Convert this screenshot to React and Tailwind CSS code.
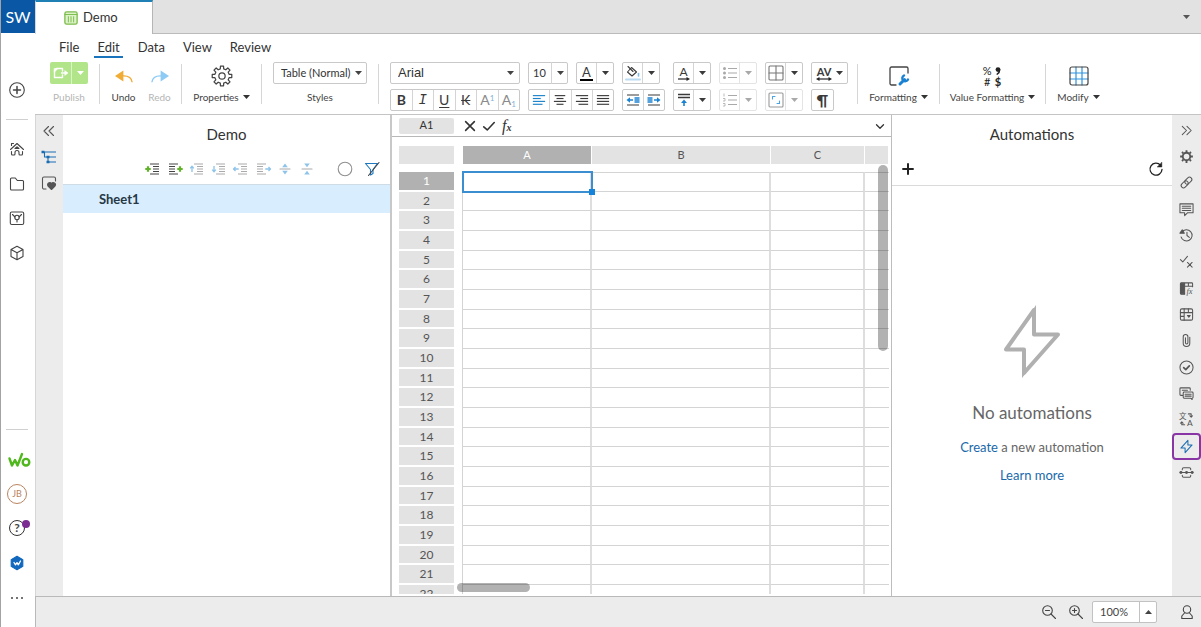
import React from 'react';

const columns = ['A', 'B', 'C', ''];
const rows = Array.from({ length: 22 }, (_, i) => i + 1);
const menus = ['File', 'Edit', 'Data', 'View', 'Review'];

// Stroked line icon on a 16 unit canvas
const Icon = ({ children, className = 'size-4', ...rest }) => (
  <svg
    viewBox="0 0 16 16"
    className={`shrink-0 overflow-visible ${className}`}
    fill="none"
    stroke="currentColor"
    strokeWidth="1.1"
    strokeLinecap="round"
    strokeLinejoin="round"
    aria-hidden="true"
    {...rest}
  >
    {children}
  </svg>
);

const Caret = ({ className = '' }) => (
  <svg viewBox="0 0 7 4" className={`h-1 w-[7px] shrink-0 ${className}`} fill="currentColor" aria-hidden="true">
    <path d="M0 0h7L3.5 4z" />
  </svg>
);

const IconButton = ({ label, children, className = '' }) => (
  <button type="button" aria-label={label} title={label} className={`flex items-center justify-center ${className}`}>
    {children}
  </button>
);

const Separator = () => <div className="mt-0.5 h-10 w-px shrink-0 bg-[#d6d6d6]" />;

/* ---------- ribbon ---------- */

const Gear = ({ className, teeth = 8, ...rest }) => {
  const points = [];
  for (let i = 0; i < teeth; i++) {
    [[-0.3, 5.3], [-0.2, 7.2], [0.2, 7.2], [0.3, 5.3]].forEach(([offset, radius]) => {
      const angle = ((i + offset) / teeth) * Math.PI * 2;
      points.push(`${(8 + radius * Math.sin(angle)).toFixed(2)},${(8 - radius * Math.cos(angle)).toFixed(2)}`);
    });
  }
  return (
    <Icon className={className} {...rest}>
      <polygon points={points.join(' ')} />
      <circle cx="8" cy="8" r="2.3" />
    </Icon>
  );
};

const ToolButton = ({ label, caret, muted, width, children }) => (
  <button type="button" className={`flex shrink-0 flex-col items-center text-[10px] leading-[14px] ${width} ${muted ? 'text-[#b5b5b5]' : 'text-[#444]'}`}>
    <span className="flex h-7 items-center">{children}</span>
    <span className="flex items-center gap-1 whitespace-nowrap">
      {label}
      {caret && <Caret className="text-[#333]" />}
    </span>
  </button>
);

// Row of joined cells with a shared outline
const Cells = ({ children, muted, className = '' }) => (
  <div className={`flex h-[22px] rounded-xs border bg-white divide-x ${muted ? 'border-[#e4e4e4] divide-[#e4e4e4] text-[#a9a9a9]' : 'border-[#c9c9c9] divide-[#d4d4d4] text-[#3a3a3a]'} ${className}`}>
    {children}
  </div>
);

const Cell = ({ label, children }) => (
  <IconButton label={label} className="min-w-0 flex-1 text-sm leading-none">{children}</IconButton>
);

const Split = ({ label, muted, children }) => (
  <Cells muted={muted} className="w-[38px]">
    <Cell label={label}>{children}</Cell>
    <IconButton label={`${label} options`} className="w-4"><Caret /></IconButton>
  </Cells>
);

const Picker = ({ label, options, className, caretClass = 'right-1.5', padding = 'pl-[7px]' }) => (
  <div className={`relative flex h-[22px] ${className}`}>
    <select aria-label={label} className={`w-full appearance-none rounded-xs border border-[#c9c9c9] bg-white text-[#333] ${padding}`}>
      {options.map((option) => <option key={option}>{option}</option>)}
    </select>
    <Caret className={`pointer-events-none absolute top-[9px] text-[#444] ${caretClass}`} />
  </div>
);

const Align = ({ lines, className = '' }) => (
  <Icon className={`size-3.5 ${className}`} strokeLinecap="butt" strokeWidth="1.3">
    {lines.map(([x1, x2], i) => <path key={i} d={`M${x1} ${3 + i * 3.3}H${x2}`} />)}
  </Icon>
);

const ListIcon = ({ numbered }) => (
  <Icon strokeLinecap="butt">
    <path d="M6 3.5h9M6 8h9M6 12.5h9" />
    {numbered
      ? <path d="M2 1.5v3M1 6.500h2v2.500H1M1 11.500h2v2.500H1" strokeWidth="0.8" />
      : <g fill="currentColor" stroke="none"><circle cx="2.500" cy="3.500" r="1.500" /><circle cx="2.500" cy="8" r="1.500" /><circle cx="2.500" cy="12.500" r="1.500" /></g>}
  </Icon>
);

const IndentIcon = ({ right }) => (
  <Icon strokeLinecap="butt">
    <path d="M2 3h12M2 13h12" />
    <g stroke="#1a82d2" strokeWidth="1.4" transform={right ? 'translate(16 0) scale(-1 1)' : undefined}>
      <path d="M3 8h5M9.500 6h5M9.500 8h5M9.500 10h5" />
      <path d="M1.500 8l3.500-2.800v5.600z" fill="#1a82d2" stroke="none" />
    </g>
  </Icon>
);

const Ribbon = () => (
  <header className="shrink-0 border-b border-[#c4c4c4] bg-white">
    <nav className="flex h-6 items-stretch gap-3 pl-[21px] text-[13px] text-[#333]">
      {menus.map((menu) => (
        <a key={menu} href={`#${menu}`} className={`border-b-2 px-[3px] pt-1 leading-[18px] ${menu === 'Edit' ? 'border-[#1a73bd]' : 'border-transparent'}`}>
          {menu}
        </a>
      ))}
    </nav>

    <div className="flex h-14 items-start overflow-hidden pt-1">
      <div className="flex w-16 shrink-0 flex-col items-center gap-1.5 pl-1 text-[10px] leading-[14px] text-[#b5b5b5]">
        <div className="flex h-[22px] w-[38px] divide-x divide-[#d9f4c5] rounded-xs bg-[#b2e58a] text-white">
          <IconButton label="Publish" className="flex-1">
            <Icon strokeWidth="1.4">
              <path d="M9.500 6V3.500H3.500L1.500 5.500v7h8V10" />
              <path d="M1.500 3.500h3.500l-3.500 3.500z" fill="currentColor" strokeWidth="0.6" />
              <path d="M8.500 8H12" />
              <path d="M12 5.800L15 8l-3 2.200z" fill="currentColor" strokeWidth="0.6" />
            </Icon>
          </IconButton>
          <IconButton label="Publish options" className="w-4"><Caret /></IconButton>
        </div>
        <span>Publish</span>
      </div>
      <Separator />
      <div className="flex w-[81px] shrink-0 justify-center pl-0.5">
        <ToolButton label="Undo" width="w-9">
          <Icon className="size-5" stroke="#f0ac34" strokeLinecap="butt">
            <path d="M6 8c5-.5 8 1 8.500 5" />
            <path d="M.800 7.900L7.500 3.500v8.800z" fill="#f0ac34" stroke="none" />
          </Icon>
        </ToolButton>
        <ToolButton label="Redo" width="w-9" muted>
          <Icon className="size-5" stroke="#8dcbf4" strokeLinecap="butt">
            <path d="M10 8c-5-.5-8 1-8.500 5" />
            <path d="M15.200 7.900L8.500 3.500v8.800z" fill="#8dcbf4" stroke="none" />
          </Icon>
        </ToolButton>
      </div>
      <Separator />
      <ToolButton label="Properties" caret width="w-[79px]">
        <Gear className="size-[22px]" strokeWidth="0.9" />
      </ToolButton>
      <Separator />
      <div className="flex w-[116px] shrink-0 flex-col items-center gap-1.5 text-[10px] leading-[14px] text-[#444]">
        <Picker label="Table style" options={['Table (Normal)']} className="w-[94px] text-[11px]" caretClass="right-[5px]" />
        <span>Styles</span>
      </div>
      <Separator />

      <div className="flex w-[478px] shrink-0 gap-2 pl-[11px]">
        <div className="flex w-[130px] flex-col gap-[5px]">
          <Picker label="Font" options={['Arial']} className="w-full font-[Liberation_Sans,sans-serif] text-[13px]" />
          <Cells>
            <Cell label="Bold"><b>B</b></Cell>
            <Cell label="Italic"><i className="font-[Liberation_Mono,monospace]">I</i></Cell>
            <Cell label="Underline"><span className="underline underline-offset-2">U</span></Cell>
            <Cell label="Strikethrough"><span className="line-through">K</span></Cell>
            <Cell label="Superscript"><span className="text-[#8a8a8a]">A<sup className="text-[8px] text-[#7fb2d6]">1</sup></span></Cell>
            <Cell label="Subscript"><span className="text-[#8a8a8a]">A<sub className="text-[8px] text-[#7fb2d6]">1</sub></span></Cell>
          </Cells>
        </div>

        <div className="flex w-[86px] flex-col gap-[5px]">
          <div className="flex gap-2">
            <div className="relative">
              <Picker label="Font size" options={['10']} className="w-10 text-[11px]" caretClass="right-1" padding="pl-1" />
              <span className="pointer-events-none absolute top-0 right-4 h-full w-px bg-[#d4d4d4]" />
            </div>
            <Split label="Text color">
              <span className="border-b-2 border-black px-0.5 text-[13px] leading-[13px]">A</span>
            </Split>
          </div>
          <Cells>
            <Cell label="Align left"><Align className="text-[#1a82c9]" lines={[[1, 15], [1, 10], [1, 15], [1, 12]]} /></Cell>
            <Cell label="Align center"><Align lines={[[2, 14], [4, 12], [1, 15], [4, 12]]} /></Cell>
            <Cell label="Align right"><Align lines={[[1, 15], [6, 15], [1, 15], [4, 15]]} /></Cell>
            <Cell label="Justify"><Align lines={[[1, 15], [1, 15], [1, 15], [1, 15]]} /></Cell>
          </Cells>
        </div>

        <div className="flex w-[43px] flex-col gap-[5px]">
          <Split label="Fill color">
            <Icon>
              <path d="M6.500 2.500L11.500 7 7 11 2.500 7z" />
              <path d="M3 1.500l5 5" />
              <path d="M1 14.500h14" stroke="#b9dcf3" strokeWidth="2" />
              <path d="M13.500 8.500v2.500" stroke="#7fbce6" strokeWidth="1.600" />
            </Icon>
          </Split>
          <Cells>
            <Cell label="Decrease indent"><IndentIcon /></Cell>
            <Cell label="Increase indent"><IndentIcon right /></Cell>
          </Cells>
        </div>

        <div className="flex w-[38px] flex-col gap-[5px]">
          <Split label="Text direction">
            <span className="flex flex-col items-center text-xs leading-[11px]">
              A
              <svg viewBox="0 0 12 4" className="h-1 w-3" aria-hidden="true">
                <path d="M0 2h9" stroke="#222" strokeWidth="1.200" />
                <path d="M8.500 0L12 2 8.500 4z" fill="#222" />
              </svg>
            </span>
          </Split>
          <Split label="Vertical align">
            <Icon strokeLinecap="butt">
              <path d="M2 2.500h12M2 5.500h12" strokeWidth="1.300" />
              <path d="M8 10v4" stroke="#1a82d2" strokeWidth="1.600" />
              <path d="M8 7.500l3 3.500H5z" fill="#1a82d2" stroke="none" />
            </Icon>
          </Split>
        </div>

        <div className="flex w-[38px] flex-col gap-[5px]">
          <Split label="Bulleted list" muted><ListIcon /></Split>
          <Split label="Numbered list" muted><ListIcon numbered /></Split>
        </div>

        <div className="flex w-[38px] flex-col gap-[5px]">
          <Split label="Borders">
            <Icon stroke="#777">
              <rect x="1" y="1" width="14" height="14" rx="1" />
              <path d="M8 1v14M1 8h14" />
            </Icon>
          </Split>
          <Split label="Merge cells" muted>
            <Icon stroke="#999">
              <rect x="1" y="1" width="14" height="14" rx="1" />
              <path d="M4.500 7V4.500H7M11.500 9v2.500H9" stroke="#4ba3df" />
            </Icon>
          </Split>
        </div>

        <div className="flex w-[37px] flex-col gap-[5px]">
          <Cells>
            <IconButton label="Letter spacing" className="w-full gap-1">
              <span className="flex flex-col items-center text-[11px] font-bold leading-[11px]">
                AV
                <svg viewBox="0 0 16 4" className="h-1 w-4" aria-hidden="true">
                  <path d="M3 2h10" stroke="#222" strokeWidth="1.200" />
                  <path d="M3.500 0L0 2l3.500 2zM12.500 0L16 2l-3.500 2z" fill="#222" />
                </svg>
              </span>
              <Caret />
            </IconButton>
          </Cells>
          <Cells className="w-[23px]"><Cell label="Paragraph marks"><b className="text-base leading-4">¶</b></Cell></Cells>
        </div>
      </div>
      <Separator />

      <ToolButton label="Formatting" caret width="w-[81px]">
        <Icon className="size-5" viewBox="0 0 20 20" strokeWidth="1.3">
          <path d="M7 19H2.500A1.500 1.500 0 0 1 1 17.500v-15A1.500 1.500 0 0 1 2.500 1h15A1.500 1.500 0 0 1 19 2.500V7" />
          <path d="M11 18l4.500-4.500" stroke="#1a82d2" strokeWidth="3" />
          <path d="M15 9.500a3 3 0 1 0 4 4" stroke="#1a82d2" strokeWidth="2.400" />
        </Icon>
      </ToolButton>
      <Separator />
      <ToolButton label="Value Formatting" caret width="w-[105px]">
        <span className="grid grid-cols-2 items-center justify-items-center gap-x-0.5 text-[11px] leading-[11px] text-[#222]">
          <span>%</span>
          <Icon className="size-2" viewBox="0 0 8 8">
            <circle cx="4" cy="2.600" r="2.400" fill="currentColor" stroke="none" />
            <path d="M5.600 3c0 2-.8 3.300-2.400 4.200" strokeWidth="1.500" />
          </Icon>
          <span>#</span>
          <b>$</b>
        </span>
      </ToolButton>
      <Separator />
      <ToolButton label="Modify" caret width="w-[65px]">
        <Icon className="size-5" viewBox="0 0 20 20" strokeWidth="1.2">
          <path d="M1 7h18M1 13h18M7 1v18M13 1v18" stroke="#2e93dc" />
          <rect x="1" y="1" width="18" height="18" rx="2" />
        </Icon>
      </ToolButton>
    </div>
  </header>
);

/* ---------- left side ---------- */

const NavRail = () => (
  <nav aria-label="Main" className="flex w-[35px] shrink-0 flex-col border-l border-[#a3a3a3] bg-white text-[#444]">
    <div className="flex h-[33px] w-full shrink-0 items-center justify-center bg-[#0957a5] text-base text-white">SW</div>
    <div className="flex flex-1 flex-col items-center pr-0.5">
      <IconButton label="New" className="mt-12 size-[18px] shrink-0">
        <Icon><circle cx="8" cy="8" r="7.300" /><path d="M8 4.500v7M4.500 8h7" strokeWidth="1.500" /></Icon>
      </IconButton>
      <div className="mt-5 h-px w-[22px] shrink-0 bg-[#d0d0d0]" />
      <div className="mt-5 flex h-[122px] shrink-0 flex-col justify-between">
        <IconButton label="Home" className="size-[18px]">
          <Icon>
            <path d="M1.500 8.500L8 2.500l6.500 6M2.500 4.500v-2h2M2.500 10.500v2.500a1 1 0 0 0 1 1H5a1 1 0 0 0 1-1v-1.500a2 2 0 0 1 4 0V13a1 1 0 0 0 1 1h1.500a1 1 0 0 0 1-1v-2.500" />
            <path d="M6 7.500L8 5.800l2 1.700z" fill="currentColor" />
          </Icon>
        </IconButton>
        <IconButton label="Files" className="size-[18px]">
          <Icon><path d="M1.500 13V3a1 1 0 0 1 1-1h3.800l2 2.500h5.200a1 1 0 0 1 1 1V13a1 1 0 0 1-1 1h-11a1 1 0 0 1-1-1z" /></Icon>
        </IconButton>
        <IconButton label="Data connections" className="size-[18px]">
          <Icon>
            <rect x="1.300" y="2" width="13.400" height="12.500" rx="1.500" />
            <path d="M3.500 4.500L6 7M12.500 4.500L10 7M8 10v2" />
            <circle cx="8" cy="7.500" r="2.200" />
          </Icon>
        </IconButton>
        <IconButton label="Apps" className="size-[18px]">
          <Icon><path d="M8 1.300l6 3.200v7L8 14.700l-6-3.200v-7zM2 4.500l6 3.300 6-3.300M8 7.800v6.900" /></Icon>
        </IconButton>
      </div>

      <div className="mt-auto h-px w-[22px] shrink-0 bg-[#d0d0d0]" />
      <div className="mt-3 mb-3 grid h-[173px] shrink-0 auto-rows-fr place-items-center">
        <IconButton label="Workiva" className="h-5 w-6">
          <svg viewBox="0 0 24 18" className="h-[18px] w-6 overflow-visible" fill="none" stroke="#4fb81c" strokeWidth="2.400" strokeLinecap="round" strokeLinejoin="round" aria-hidden="true">
            <path d="M4.500 8.500L7 15.500l3-5.500 2.500 5.500L17 4" />
            <circle cx="21" cy="12.200" r="3.300" />
          </svg>
        </IconButton>
        <button type="button" aria-label="Profile" className="size-5 rounded-full border border-[#b98460] text-[9px] leading-none text-[#b98460]">JB</button>
        <IconButton label="Help" className="relative size-4 rounded-full border border-[#333] text-xs font-bold leading-none">
          ?
          <span className="absolute -top-px left-3 size-2 rounded-full bg-[#7b2d91]" />
        </IconButton>
        <IconButton label="Wdesk" className="size-4">
          <Icon>
            <path d="M8 1.200l5.800 3.400v6.800L8 14.800l-5.800-3.400V4.600z" fill="#1168bd" stroke="#1168bd" />
            <path d="M5 7.500l1.500 2.300L8 7.600l1.300 2.200L11.500 6" stroke="#fff" strokeWidth="1.300" />
          </Icon>
        </IconButton>
        <IconButton label="More" className="size-4">
          <Icon fill="currentColor" stroke="none">
            <circle cx="3" cy="8" r="1" /><circle cx="8" cy="8" r="1" /><circle cx="13" cy="8" r="1" />
          </Icon>
        </IconButton>
      </div>
    </div>
  </nav>
);

// Outline toolbar glyph: text lines with a mark on one side
const OutlineIcon = ({ mark, right, muted }) => {
  const color = muted ? '#8ec4ea' : '#62b22b';
  const shapes = {
    plus: 'M3 5.200v5.600M.3 8h5.400',
    up: 'M3 11V5.500M1.200 7.300L3 5.200l1.800 2.100',
    down: 'M3 5v5.500M1.200 8.700L3 10.800l1.800-2.100',
    left: 'M5.700 8H.8M2.500 6L.5 8l2 2',
  };
  return (
    <Icon strokeLinecap="butt" className={muted ? 'size-4 text-[#aaa]' : 'size-4 text-[#444]'}>
      <g transform={right ? 'translate(16 0) scale(-1 1)' : undefined}>
        <path d="M5 3h9M8 5.500h6M8 8h6M8 10.500h6M5 13h9" />
        <path d={shapes[mark]} stroke={color} strokeWidth={muted ? 1.3 : 2.2} />
      </g>
    </Icon>
  );
};

const OutlinePanel = () => (
  <aside className="flex w-[329px] shrink-0 flex-col border-r-2 border-[#c8c8c8] bg-white">
    <h2 className="h-[38px] text-center text-[15px] leading-[38px] text-[#333]">Demo</h2>
    <div className="flex h-8 shrink-0 items-center justify-end border-b border-[#cfdbe5] pr-2.5">
      <div className="mr-[22px] flex gap-1.5">
        <IconButton label="Insert before"><OutlineIcon mark="plus" /></IconButton>
        <IconButton label="Insert after"><OutlineIcon mark="plus" right /></IconButton>
        <IconButton label="Move up"><OutlineIcon mark="up" muted /></IconButton>
        <IconButton label="Move down"><OutlineIcon mark="down" muted /></IconButton>
        <IconButton label="Outdent"><OutlineIcon mark="left" muted /></IconButton>
        <IconButton label="Indent"><OutlineIcon mark="left" muted right /></IconButton>
        <IconButton label="Expand all">
          <Icon className="size-4 text-[#aaa]"><path d="M3 8h10" /><path d="M8 2.500l2.800 3.700H5.200zM8 13.500l2.800-3.700H5.200z" fill="#8ec4ea" stroke="none" /></Icon>
        </IconButton>
        <IconButton label="Collapse all">
          <Icon className="size-4 text-[#aaa]"><path d="M3 8h10" /><path d="M8 6.200l2.800-3.700H5.200zM8 9.800l2.800 3.700H5.200z" fill="#8ec4ea" stroke="none" /></Icon>
        </IconButton>
      </div>
      <IconButton label="Status"><Icon className="size-4 text-[#8f8f8f]"><circle cx="8" cy="8" r="6.800" /></Icon></IconButton>
      <IconButton label="Clear filter" className="ml-[11px]">
        <Icon stroke="#1d78bf"><path d="M1.500 2.500h12l-4.500 6v4l-2.500 1.500v-5.500z" /><path d="M15 1.500L4.500 14.500" stroke="#444" /></Icon>
      </IconButton>
    </div>
    <a href="#Sheet1" className="h-7 bg-[#d8edfd] pl-9 text-[13px] font-bold leading-7 text-[#273845]">Sheet1</a>
  </aside>
);

const LeftStrip = () => (
  <div className="flex w-7 shrink-0 flex-col items-center border-l border-[#d6d6d6] bg-[#ececec] pt-[3px] pr-0.5 text-[#555]">
    <IconButton label="Collapse panel" className="size-[26px]"><Icon><path d="M7.500 3.500L3 8l4.500 4.500M12.500 3.500L8 8l4.500 4.500" /></Icon></IconButton>
    <IconButton label="Outline" className="size-[26px]">
      <Icon className="size-4 text-[#1b6db3]" strokeLinecap="butt">
        <path d="M2 3H15M3.500 3v5H7M7 8h8M7 8v5h8" />
        <path d="M.500 3h3M5.500 8h3M5.500 13h3" strokeWidth="2.600" />
      </Icon>
    </IconButton>
    <IconButton label="Favorites" className="size-[26px]">
      <Icon>
        <path d="M5 14H3a1.500 1.500 0 0 1-1.500-1.500v-9A1.500 1.500 0 0 1 3 2h10a1.500 1.500 0 0 1 1.500 1.500V6" />
        <path d="M10.500 14.500L7 11a2 2 0 0 1 3.500-2.500A2 2 0 0 1 14 11z" fill="currentColor" />
      </Icon>
    </IconButton>
  </div>
);

/* ---------- spreadsheet ---------- */

const GridColumns = () => (
  <colgroup>
    <col className="w-[55px]" />
    <col className="w-[9px]" />
    <col className="w-[129px]" />
    <col className="w-[179px]" />
    <col className="w-[94px]" />
    <col />
  </colgroup>
);

const Sheet = () => (
  <main className="relative flex min-w-0 flex-1 flex-col overflow-hidden bg-white">
    <div className="flex h-[22px] shrink-0 items-center border-b border-[#b8b8b8] pr-1 pl-[7px] text-[#333]">
      <input aria-label="Cell reference" defaultValue="A1" className="h-4 w-[55px] rounded-xs bg-[#e3e3e3] text-center text-[11px] outline-none" />
      <IconButton label="Cancel" className="ml-2 w-4"><Icon className="size-3.5" strokeWidth="1.800"><path d="M3 3l10 10M13 3L3 13" /></Icon></IconButton>
      <IconButton label="Accept" className="ml-[3px] w-4"><Icon className="size-3.5" strokeWidth="1.800"><path d="M2 9l4 3.500L14 4" /></Icon></IconButton>
      <IconButton label="Insert function" className="ml-[5px] font-[Liberation_Serif,serif] text-base italic leading-4">
        f<sub className="text-[10px] font-bold">x</sub>
      </IconButton>
      <input aria-label="Formula" className="h-4 min-w-0 flex-1 px-2 text-xs outline-none" />
      <IconButton label="Expand formula bar"><Icon className="size-3.5" strokeWidth="1.500"><path d="M4 6.500l4 4 4-4" /></Icon></IconButton>
    </div>

    <div className="mr-0.5 mb-0.5 ml-[7px] min-h-0 flex-1 overflow-hidden pt-[9px]">
      <table className="w-full table-fixed border-separate border-spacing-0 text-center text-xs text-[#555]">
        <GridColumns />
        <thead>
          <tr className="h-[18px] text-[11px]">
            <td className="bg-[#e3e3e3]" />
            <td />
            {columns.map((column, i) => (
              <th key={i} scope="col" className={`border-r border-white p-0 font-normal leading-[18px] ${i === 0 ? 'bg-[#b1b1b1] text-white' : 'bg-[#e3e3e3]'}`}>
                {column}
              </th>
            ))}
          </tr>
          <tr className="h-2"><td colSpan={6} className="p-0" /></tr>
        </thead>
      </table>
      <table className="h-[433px] w-full table-fixed border-separate border-spacing-0 text-center text-xs text-[#555]">
        <GridColumns />
        <tbody>
          {rows.map((row) => (
            <tr key={row}>
              <th scope="row" className={`border-b-2 border-white p-0 font-normal leading-4 ${row === 1 ? 'bg-[#b1b1b1] text-white' : 'bg-[#e3e3e3]'}`}>
                {row}
              </th>
              <td className="border-r border-[#d4d4d4] p-0" />
              {columns.map((column, i) => (
                <td key={i} className={`relative border-[#d4d4d4] border-b p-0 ${row === 1 ? 'border-t' : ''} ${i < 3 ? 'border-r-2 border-r-[#dedede]' : ''}`}>
                  {row === 1 && i === 0 && (
                    <div className="absolute -inset-y-0.5 -right-[3px] -left-px z-10 border-2 border-[#3b8fd0]">
                      <span className="absolute -right-1 -bottom-1 size-1.5 bg-[#1583da]" />
                    </div>
                  )}
                </td>
              ))}
            </tr>
          ))}
        </tbody>
      </table>
    </div>

    {/* Scrollbar thumbs */}
    <div className="absolute top-[50px] right-[3px] z-20 h-[186px] w-2.5 rounded-full bg-black/30" />
    <div className="absolute bottom-1 left-[65px] z-20 h-[9px] w-[73px] rounded-full bg-black/30" />
  </main>
);

/* ---------- right side ---------- */

const Automations = () => (
  <aside className="flex w-[281px] shrink-0 flex-col border-l border-[#bdbdbd] bg-white">
    <h2 className="h-[38px] shrink-0 text-center text-[15px] leading-[38px] text-[#333]">Automations</h2>
    <div className="flex h-[33px] shrink-0 items-center justify-between border-b border-[#dadada] px-2 text-[#222]">
      <IconButton label="Add automation"><Icon strokeWidth="2" strokeLinecap="butt"><path d="M8 2.300v11.400M2.300 8h11.400" /></Icon></IconButton>
      <IconButton label="Refresh">
        <Icon strokeWidth="1.300"><path d="M12.500 4.200A6 6 0 1 0 14 8.500" /><path d="M13.800 1.500V6H9.500z" fill="currentColor" strokeWidth="0.500" /></Icon>
      </IconButton>
    </div>
    <div className="flex flex-1 flex-col items-center pt-[118px] text-[13px] leading-[18px] text-[#666]">
      <svg viewBox="0 0 58 76" className="h-[76px] w-[58px] shrink-0" fill="none" stroke="#b0b0b0" strokeWidth="4" strokeLinejoin="round" aria-hidden="true">
        <path d="M31 6v24.500h24L21 69V45.500H3z" />
        <path d="M29 7l4-6v8zM19 66v8l4-5z" fill="#b0b0b0" stroke="none" />
      </svg>
      <p className="mt-[21px] text-[17px] leading-6">No automations</p>
      <p className="mt-[13px]"><a href="#create" className="text-[#1a69aa]">Create</a> a new automation</p>
      <a href="#learn" className="mt-2.5 text-[#1a69aa]">Learn more</a>
    </div>
  </aside>
);

const tools = [
  { label: 'Collapse tools', icon: <path d="M3.500 3.500L8 8l-4.500 4.500M8.500 3.500L13 8l-4.500 4.500" /> },
  {
    label: 'Settings',
    icon: (
      <>
        <circle cx="8" cy="8" r="4" strokeWidth="2" />
        <path d="M8 1.200v2M8 12.800v2M1.200 8h2M12.800 8h2M3.200 3.200l1.400 1.400M11.400 11.400l1.400 1.400M3.200 12.800l1.400-1.400M11.400 4.600l1.400-1.400" strokeWidth="2" strokeLinecap="butt" />
      </>
    ),
  },
  {
    label: 'Links',
    icon: <g transform="rotate(-45 8 8)"><rect x="1" y="5.500" width="8.500" height="5" rx="2.500" /><rect x="6.500" y="5.500" width="8.500" height="5" rx="2.500" /></g>,
  },
  { label: 'Comments', icon: <path d="M1 2h14v9.500H9L6 14.500v-3H1zM3.500 4.500h9M3.500 6.700h9M3.500 9h9" /> },
  {
    label: 'History',
    icon: <><path d="M3 4.500a6 6 0 1 1-.8 5M8.500 4.500V8l2.500 2" /><path d="M1 5.500L3.500 2l2.200 3.500z" fill="currentColor" /></>,
  },
  { label: 'Validation', icon: <path d="M1.500 6l2.500 2.500 5-6M9 9l5 5M14 9l-5 5" /> },
  {
    label: 'Functions',
    icon: (
      <>
        <path d="M14.500 6V3a1 1 0 0 0-1-1h-11a1 1 0 0 0-1 1v10a1 1 0 0 0 1 1H6M6 5.500h8.500M10 2v3.500" />
        <path d="M2 2.500h4v11H2z" fill="currentColor" />
        <text x="8" y="14" fontSize="9" fontStyle="italic" fontFamily="Liberation Serif, serif" fill="currentColor" stroke="none">fx</text>
      </>
    ),
  },
  { label: 'Tables', icon: <><rect x="1.500" y="2" width="13" height="12" rx="1.500" /><path d="M1.500 6h13M5.500 2v12M10 2v4M1.500 10h4" /><path d="M9 9h3l-1.500 2z" fill="currentColor" /></> },
  { label: 'Attachments', icon: <path d="M11.500 4.500v6.500a3.500 3.500 0 0 1-7 0V4a2.500 2.500 0 0 1 5 0v6.500a1.300 1.300 0 0 1-2.600 0V5" /> },
  { label: 'Tasks', icon: <><circle cx="8" cy="8" r="7" /><path d="M5 8.200l2.200 2L11 6.300" strokeWidth="1.800" /></> },
  { label: 'Threads', icon: <path d="M3.500 10H2a1 1 0 0 1-1-1V3a1 1 0 0 1 1-1h9a1 1 0 0 1 1 1v1.500M3.500 4.500H9M5.500 6.500h8.500a1 1 0 0 1 1 1V12a1 1 0 0 1-1 1v1.500L12.500 13h-7a1 1 0 0 1-1-1V7.500a1 1 0 0 1 1-1zM6.500 8.800h6.500M6.500 10.800h6.500" /> },
  {
    label: 'Translate',
    icon: (
      <>
        <text x="0" y="7" fontSize="8" fontFamily="Noto Sans CJK SC, sans-serif" fill="currentColor" stroke="none">文</text>
        <text x="8.500" y="15" fontSize="9" fill="currentColor" stroke="none">A</text>
        <path d="M10 2h3v3M11.500 4L13 5.500 14.500 4M6 13.500H3v-3M1.500 12L3 10.500 4.500 12" />
      </>
    ),
  },
  { label: 'Automations', active: true, icon: <path d="M9.500 1.500v4.800H14L6.500 14.500V9.700H2z" /> },
  { label: 'Connections', icon: <><path d="M1 8h14M3.500 5V4.500a1.500 1.500 0 0 1 1.500-1.500h6a1.500 1.500 0 0 1 1.500 1.500V5M3.500 11v.5A1.500 1.500 0 0 0 5 13h6a1.500 1.500 0 0 0 1.500-1.500V11" /><path d="M2 8h.1M8 8h.1M14 8h.1" strokeWidth="3" /></> },
];

const ToolStrip = () => (
  <div className="w-[29px] shrink-0 bg-[#ececec] pt-0.5">
    <div className="flex h-[369px] flex-col justify-between">
      {tools.map(({ label, icon, active }) => (
        <IconButton key={label} label={label} className={`h-[27px] w-full ${active ? 'rounded-sm border-2 border-[#8a35a5] text-[#1b6db3]' : 'text-[#555]'}`}>
          <Icon className="size-[15px]">{icon}</Icon>
        </IconButton>
      ))}
    </div>
  </div>
);

const StatusBar = () => (
  <footer className="flex h-[31px] shrink-0 items-center justify-end border-t border-l border-[#b9b9b9] bg-[#ececec] pr-1.5 text-[#444]">
    <IconButton label="Zoom out"><Icon><circle cx="6.500" cy="6.500" r="4.800" /><path d="M4.500 6.500h4M10 10l4.500 4.500" /></Icon></IconButton>
    <IconButton label="Zoom in" className="ml-[11px]"><Icon><circle cx="6.500" cy="6.500" r="4.800" /><path d="M4.500 6.500h4M6.500 4.500v4M10 10l4.500 4.500" /></Icon></IconButton>
    <div className="mr-[22px] ml-2 flex h-[22px] w-[65px] divide-x divide-[#c2c2c2] rounded-xs border border-[#c2c2c2] bg-white">
      <input aria-label="Zoom level" defaultValue="100%" className="min-w-0 flex-1 pl-[7px] text-[11px] outline-none" />
      <IconButton label="Zoom options" className="w-4"><Caret className="rotate-180" /></IconButton>
    </div>
    <IconButton label="Presence"><Icon><circle cx="8" cy="5.500" r="3.700" /><path d="M5.500 9L2.800 12v2.500h10.400V12L10.500 9" /></Icon></IconButton>
  </footer>
);

const App = () => {
  return (
    <div className="flex h-screen overflow-hidden font-[Lato,sans-serif]">
      <NavRail />
      <div className="flex min-w-0 flex-1 flex-col">
        {/* Document tabs */}
        <div className="flex h-[34px] shrink-0 bg-[#e2e2e2]">
          <a href="#Demo" className="flex w-[118px] items-center gap-[5px] border-t-2 border-r border-l border-t-[#1f80b5] border-r-[#b5b5b5] border-l-[#d6d6d6] bg-white pl-7 text-[13px] text-[#333]">
            <Icon className="size-3.5" stroke="#7cbc4c">
              <rect x="1" y="1" width="14" height="14" rx="2" fill="#dcf2c8" strokeWidth="1.500" />
              <path d="M1 4h14M5 6.500v6M8 6.500v6M11 6.500v6" />
            </Icon>
            Demo
          </a>
          <div className="flex flex-1 items-center justify-end border-b border-[#bbb] pr-[11px] text-[#555]">
            <IconButton label="All tabs"><Caret /></IconButton>
          </div>
        </div>
        <Ribbon />
        <div className="flex min-h-0 flex-1">
          <LeftStrip />
          <OutlinePanel />
          <Sheet />
          <Automations />
          <ToolStrip />
        </div>
        <StatusBar />
      </div>
    </div>
  );
};

export default App;
